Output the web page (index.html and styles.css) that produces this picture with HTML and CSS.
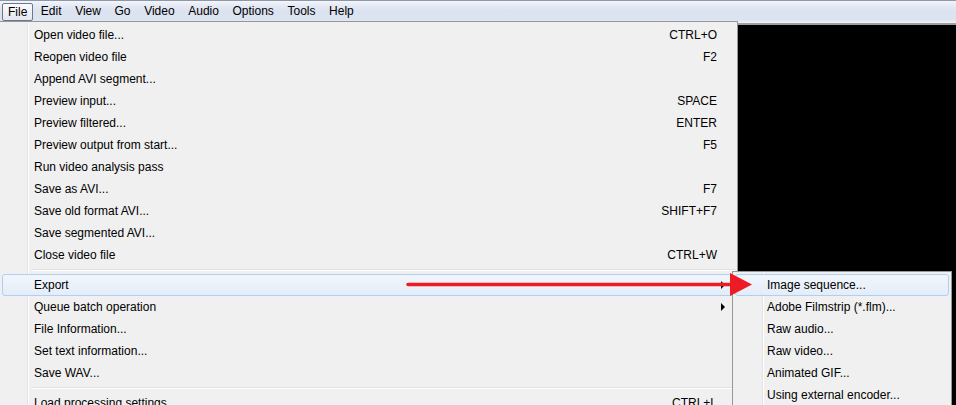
FILE: index.html
```html
<!DOCTYPE html>
<html>
<head>
<meta charset="utf-8">
<link rel="stylesheet" href="styles.css">
</head>
<body>
<div class="menubar">
  <span class="mb-item active">File</span>
  <span class="mb-item">Edit</span>
  <span class="mb-item">View</span>
  <span class="mb-item">Go</span>
  <span class="mb-item">Video</span>
  <span class="mb-item">Audio</span>
  <span class="mb-item">Options</span>
  <span class="mb-item">Tools</span>
  <span class="mb-item">Help</span>
</div>
<div class="workspace">
  <div class="pane-gap"></div>
  <div class="pane"></div>
</div>

<div class="menu file-menu">
  <div class="item"><span class="label">Open video file...</span><span class="key">CTRL+O</span></div>
  <div class="item"><span class="label">Reopen video file</span><span class="key">F2</span></div>
  <div class="item"><span class="label">Append AVI segment...</span></div>
  <div class="item"><span class="label">Preview input...</span><span class="key">SPACE</span></div>
  <div class="item"><span class="label">Preview filtered...</span><span class="key">ENTER</span></div>
  <div class="item"><span class="label">Preview output from start...</span><span class="key">F5</span></div>
  <div class="item"><span class="label">Run video analysis pass</span></div>
  <div class="item"><span class="label">Save as AVI...</span><span class="key">F7</span></div>
  <div class="item"><span class="label">Save old format AVI...</span><span class="key">SHIFT+F7</span></div>
  <div class="item"><span class="label">Save segmented AVI...</span></div>
  <div class="item"><span class="label">Close video file</span><span class="key">CTRL+W</span></div>
  <div class="sep"></div>
  <div class="item hot"><span class="label">Export</span><span class="arrow"></span></div>
  <div class="item"><span class="label">Queue batch operation</span><span class="arrow"></span></div>
  <div class="item"><span class="label">File Information...</span></div>
  <div class="item"><span class="label">Set text information...</span></div>
  <div class="item"><span class="label">Save WAV...</span></div>
  <div class="sep"></div>
  <div class="item"><span class="label">Load processing settings</span><span class="key">CTRL+L</span></div>
</div>

<div class="menu sub-menu">
  <div class="item hot"><span class="label">Image sequence...</span></div>
  <div class="item"><span class="label">Adobe Filmstrip (*.flm)...</span></div>
  <div class="item"><span class="label">Raw audio...</span></div>
  <div class="item"><span class="label">Raw video...</span></div>
  <div class="item"><span class="label">Animated GIF...</span></div>
  <div class="item"><span class="label">Using external encoder...</span></div>
</div>

<svg class="red-arrow" width="360" height="30" viewBox="0 0 360 30">
  <line x1="2" y1="13.5" x2="330" y2="13.5" stroke="#ed1c24" stroke-width="3.5" stroke-linecap="round"/>
  <polygon points="324,2 346,13.5 324,25" fill="#ed1c24"/>
</svg>
</body>
</html>
```

FILE: styles.css
```css
html, body {
  margin: 0;
  padding: 0;
}
body {
  width: 956px;
  height: 405px;
  overflow: hidden;
  font-family: "Liberation Sans", Arial, sans-serif;
  font-size: 12px;
  color: #000;
  background: #f0f0f0;
  position: relative;
}
.menubar {
  height: 22px;
  box-sizing: border-box;
  border-top: 1px solid #8d99ab;
  background: linear-gradient(#f4f6fa 0px, #e6ebf5 4px, #dbe2f0 10px, #dde4f1 19px, #eef1f8 21px);
  display: flex;
  align-items: center;
  padding-left: 1px;
}
.mb-item {
  padding: 0 6.5px;
  height: 18px;
  line-height: 17px;
  box-sizing: border-box;
  margin-right: 0.6px;
}
.mb-item.active {
  border: 1px solid #6e7785;
  border-radius: 2px;
  background: linear-gradient(#fafbfd, #e4e8ef);
  padding: 0 5px;
  margin-left: 1px;
  margin-right: 1px;
}
.workspace {
  display: flex;
  height: 383px;
}
.pane-gap {
  width: 738px;
  background: #f0f0f0;
}
.pane {
  flex: 1;
  background: #000;
  border-top: 2px solid #a0a0a0;
  margin-top: 1px;
}
.menu {
  position: absolute;
  background: #f0f0f0;
  border: 1px solid #979797;
  box-sizing: border-box;
  padding: 2px 2px;
  background-image: linear-gradient(to right, transparent 27px, #e2e3e3 27px, #e2e3e3 28px, #ffffff 28px, #ffffff 29px, transparent 29px);
}
.file-menu {
  left: -1px;
  top: 21px;
  width: 739px;
  height: 400px;
}
.sub-menu {
  left: 732px;
  top: 271px;
  width: 220px;
  height: 150px;
  box-shadow: 2px 2px 2px rgba(0,0,0,0.3);
  background-image: linear-gradient(to right, transparent 29px, #e2e3e3 29px, #e2e3e3 30px, #ffffff 30px, #ffffff 31px, transparent 31px);
}
.item {
  height: 22px;
  display: flex;
  align-items: center;
  position: relative;
  box-sizing: border-box;
  border: 1px solid transparent;
  border-radius: 3px;
}
.file-menu .item .label {
  padding-left: 31px;
  flex: 1;
}
.sub-menu .item .label {
  padding-left: 31px;
  flex: 1;
}
.item .key {
  padding-right: 17px;
}
.item.hot {
  border-color: #aecff7;
  background: linear-gradient(#f2f6fb, #e3ecf8);
}
.arrow {
  position: absolute;
  right: 9px;
  top: 6px;
  width: 0;
  height: 0;
  border-left: 4px solid #000;
  border-top: 4px solid transparent;
  border-bottom: 4px solid transparent;
}
.sep {
  height: 8px;
  margin-left: 30px;
  background: linear-gradient(transparent 3px, #e0e0e0 3px, #e0e0e0 4px, #ffffff 4px, #ffffff 5px, transparent 5px);
}
.red-arrow {
  position: absolute;
  left: 406px;
  top: 271px;
}
```
